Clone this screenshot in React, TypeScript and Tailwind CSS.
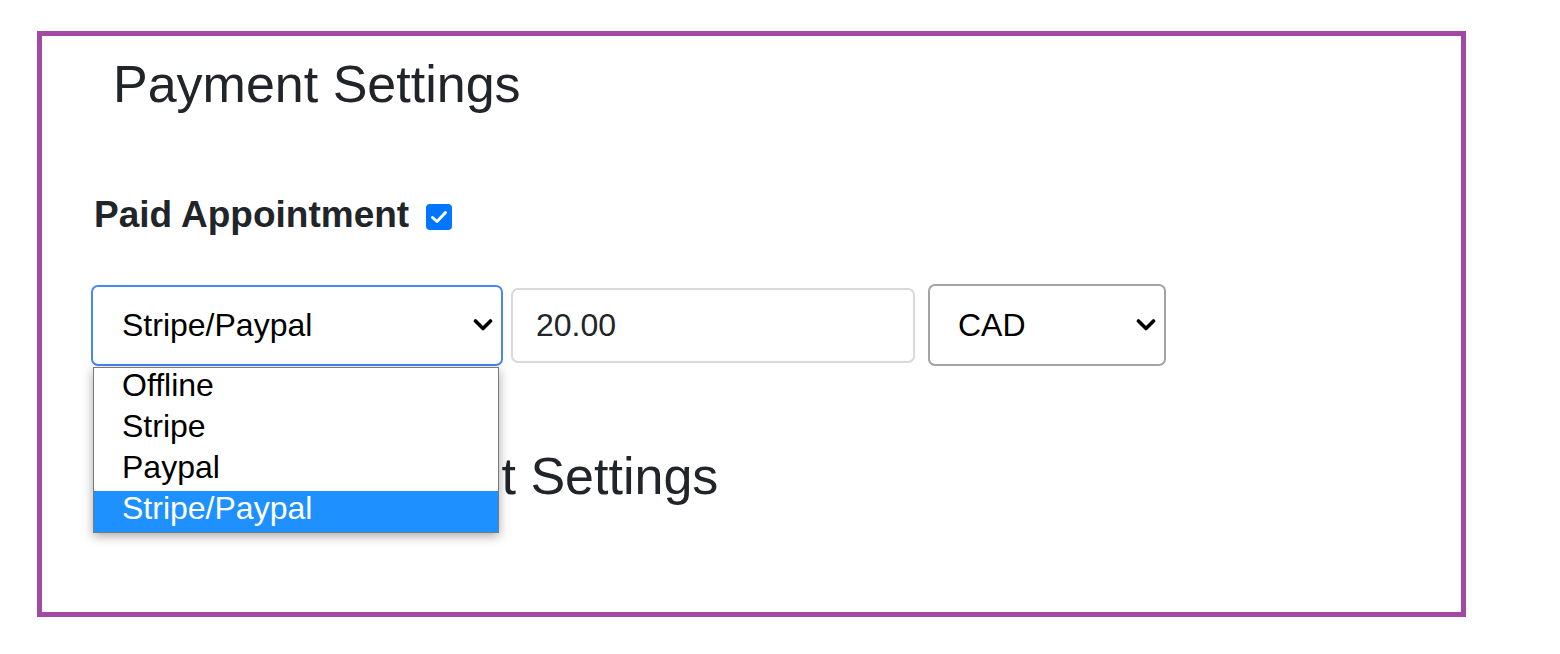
import React from "react";

const Chevron = () => (
  <svg width="20" height="12" viewBox="0 0 20 12" fill="none">
    <polyline points="2.5,2 10,9.5 17.5,2" stroke="#000" strokeWidth="3.6" strokeLinecap="round" strokeLinejoin="round" />
  </svg>
);

export default function App() {
  const font = { fontFamily: '"Liberation Sans", Arial, sans-serif' };
  return (
    <div className="w-full h-[654px] bg-white pt-[31px] pl-[37px]" style={font}>
      <div className="w-[1429px] h-[586px] border-[5px] border-[#a349a4] pl-[49px]">
        <h2 className="mt-[22px] ml-[22px] text-[52px] leading-none text-[#212529] font-normal">
          Payment Settings
        </h2>

        <div className="mt-[86px] ml-[3px] flex items-start">
          <span className="text-[37px] leading-none font-bold text-[#212529]">Paid Appointment</span>
          <span className="ml-[17px] mt-[8px] w-[26px] h-[26px] rounded-[4px] bg-[#0075ff] flex items-center justify-center">
            <svg width="18" height="14" viewBox="0 0 18 14" fill="none">
              <polyline points="2.5,7.5 7,11.5 15.5,2.5" stroke="#fff" strokeWidth="3" strokeLinecap="round" strokeLinejoin="round" />
            </svg>
          </span>
        </div>

        <div className="mt-[51px] flex items-center">
          <div className="relative">
            <div className="w-[412px] h-[81px] rounded-[7px] border-2 border-[#4a86f7] bg-white flex items-center justify-between pl-[29px] pr-[8px] text-[32px] text-black">
              <span>Stripe/Paypal</span>
              <Chevron />
            </div>
            <div className="absolute left-[2px] top-[82px] w-[406px] border border-[#7a7a7a] bg-white shadow-[0_3px_10px_rgba(0,0,0,0.35)] z-10">
              {["Offline", "Stripe", "Paypal", "Stripe/Paypal"].map((o, i) => (
                <div
                  key={o}
                  className={
                    i === 3
                      ? "h-[41px] leading-[35px] pl-[28px] text-[32px] bg-[#1e90ff] text-white"
                      : "h-[41px] leading-[35px] pl-[28px] text-[32px] text-black"
                  }
                >
                  {o}
                </div>
              ))}
            </div>
          </div>
          <div className="ml-[8px] w-[404px] h-[75px] rounded-[7px] border-2 border-[#d6dade] bg-white flex items-center pl-[23px] text-[32px] text-[#212529]">
            20.00
          </div>
          <div className="ml-[13px] w-[238px] h-[82px] rounded-[7px] border-2 border-[#a3a3a3] bg-white flex items-center justify-between pl-[28px] pr-[8px] text-[32px] text-black">
            <span>CAD</span>
            <Chevron />
          </div>
        </div>

        <h2 className="mt-[84px] ml-[29px] text-[52px] leading-none text-[#212529] font-normal">
          Deposit Payment Settings
        </h2>
      </div>
    </div>
  );
}
